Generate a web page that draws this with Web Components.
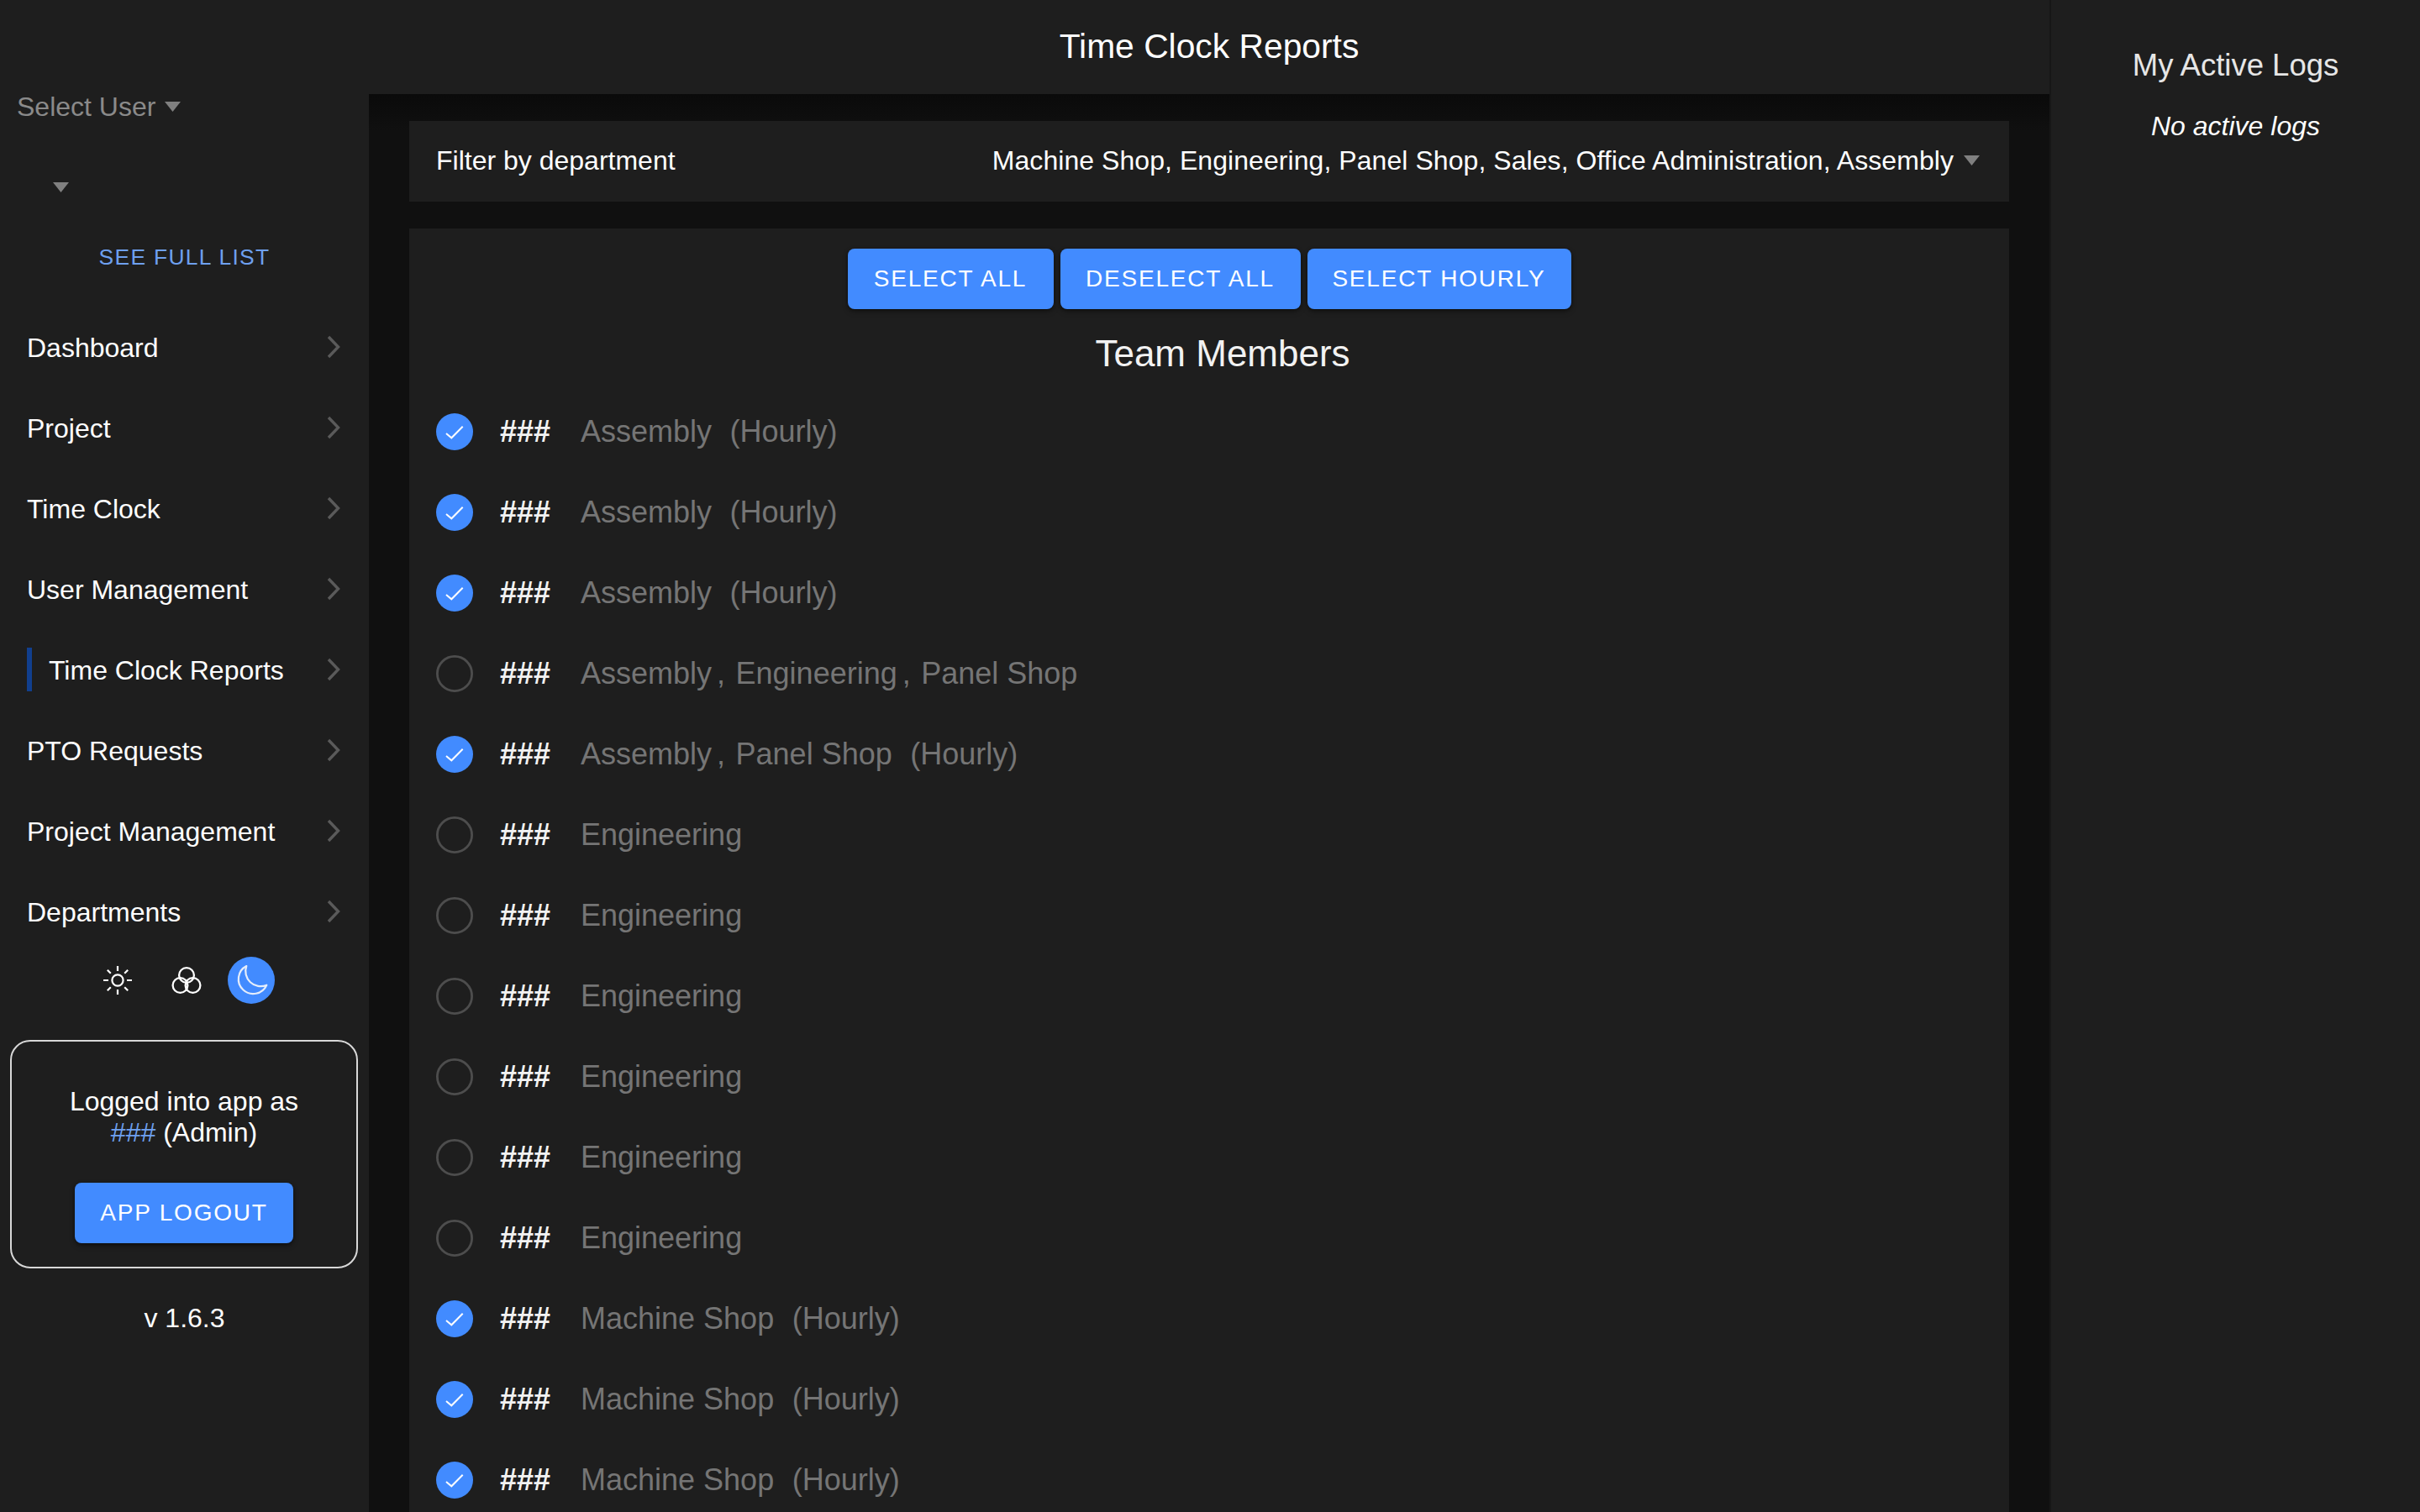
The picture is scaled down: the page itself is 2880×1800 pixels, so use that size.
<!DOCTYPE html>
<html lang="en">
<head>
<meta charset="utf-8">
<title>Time Clock Reports</title>
<style>
  html, body { margin: 0; height: 100%; overflow: hidden; background: #0f0f0f; }
  body { font-family: "Liberation Sans", Arial, sans-serif; color: #fff; }
</style>
</head>
<body>
<tc-app>
  <tc-sidebar slot="sidebar">
    <tc-nav-item>Dashboard</tc-nav-item>
    <tc-nav-item>Project</tc-nav-item>
    <tc-nav-item>Time Clock</tc-nav-item>
    <tc-nav-item>User Management</tc-nav-item>
    <tc-nav-item active>Time Clock Reports</tc-nav-item>
    <tc-nav-item>PTO Requests</tc-nav-item>
    <tc-nav-item>Project Management</tc-nav-item>
    <tc-nav-item>Departments</tc-nav-item>
  </tc-sidebar>

  <tc-report slot="main">
    <tc-member checked depts="Assembly" hourly></tc-member>
    <tc-member checked depts="Assembly" hourly></tc-member>
    <tc-member checked depts="Assembly" hourly></tc-member>
    <tc-member depts="Assembly|Engineering|Panel Shop"></tc-member>
    <tc-member checked depts="Assembly|Panel Shop" hourly></tc-member>
    <tc-member depts="Engineering"></tc-member>
    <tc-member depts="Engineering"></tc-member>
    <tc-member depts="Engineering"></tc-member>
    <tc-member depts="Engineering"></tc-member>
    <tc-member depts="Engineering"></tc-member>
    <tc-member depts="Engineering"></tc-member>
    <tc-member checked depts="Machine Shop" hourly></tc-member>
    <tc-member checked depts="Machine Shop" hourly></tc-member>
    <tc-member checked depts="Machine Shop" hourly></tc-member>
  </tc-report>

  <tc-active-logs slot="aside"></tc-active-logs>
</tc-app>

<script>
const FONT = '"Liberation Sans", Arial, sans-serif';

// Small grey dropdown triangle, used in a few places
const caret = (w = 19, h = 12) => `
  <svg width="${w}" height="${h}" viewBox="0 0 19 12" aria-hidden="true" style="display:block;flex:none">
    <path d="M0 0H19L9.5 12Z" fill="#808080"/>
  </svg>`;

class TcApp extends HTMLElement {
  constructor() {
    super();
    this.attachShadow({ mode: 'open' });
    this.shadowRoot.innerHTML = `
      <style>
        :host {
          display: grid;
          grid-template-columns: 439px 2000px 441px;
          height: 1800px;
          overflow: hidden;
          font-family: ${FONT};
        }
        ::slotted(*) { min-width: 0; }
      </style>
      <slot name="sidebar"></slot>
      <slot name="main"></slot>
      <slot name="aside"></slot>
    `;
  }
}

class TcButton extends HTMLElement {
  constructor() {
    super();
    this.attachShadow({ mode: 'open' });
    this.shadowRoot.innerHTML = `
      <style>
        :host { display: inline-block; vertical-align: top; }
        button {
          display: block;
          height: 72px;
          width: var(--btn-width, auto);
          padding: 0;
          border: none;
          border-radius: 8px;
          background: #428bff;
          color: #fff;
          font: 28px/72px ${FONT};
          letter-spacing: 1.8px;
          text-transform: uppercase;
          box-shadow: 0 3px 6px rgba(0, 0, 0, .35), 0 1px 3px rgba(0, 0, 0, .3);
        }
      </style>
      <button type="button"><slot></slot></button>
    `;
  }
}

class TcNavItem extends HTMLElement {
  constructor() {
    super();
    this.attachShadow({ mode: 'open' });
    this.shadowRoot.innerHTML = `
      <style>
        :host {
          display: flex;
          align-items: center;
          justify-content: space-between;
          height: 96px;
          padding: 0 32px;
          font-size: 32px;
          color: #fff;
        }
        .label { display: flex; align-items: center; white-space: nowrap; }
        .text { padding-top: 2px; }
        :host([active]) .label::before {
          content: "";
          width: 6px;
          height: 52px;
          margin-right: 20px;
          background: #113f8e;
        }
        svg { display: block; flex: none; margin-right: 2px; }
      </style>
      <span class="label"><span class="text"><slot></slot></span></span>
      <svg width="18" height="30" viewBox="0 0 18 30" aria-hidden="true">
        <path d="M4 3L15.5 15L4 27" fill="none" stroke="#5a5a5a" stroke-width="3.4"/>
      </svg>
    `;
  }
}

class TcThemeSwitch extends HTMLElement {
  constructor() {
    super();
    this.attachShadow({ mode: 'open' });
    this.shadowRoot.innerHTML = `
      <style>
        :host { display: block; height: 56px; }
        .row { display: flex; padding-left: 112px; }
        .opt { flex: none; width: 56px; height: 56px; display: grid; place-items: center; border-radius: 50%; }
        .opt + .opt { margin-left: 26px; }
        .opt.on { margin-left: 21px; background: #428bff; }
        svg { display: block; }
      </style>
      <div class="row">
        <div class="opt">
          <svg width="40" height="40" viewBox="-20 -20 40 40" fill="none" stroke="#fff" stroke-width="2.2" aria-hidden="true">
            <circle r="6.6"/>
            <path d="M0-17V-11M0 11V17M-17 0H-11M11 0H17M-12.2-12.2L-8.2-8.2M8.2 8.2L12.2 12.2M-12.2 12.2L-8.2 8.2M8.2-8.2L12.2-12.2"/>
          </svg>
        </div>
        <div class="opt">
          <svg width="40" height="40" viewBox="-20 -20 40 40" fill="none" stroke="#fff" stroke-width="2.3" aria-hidden="true">
            <circle cx="0" cy="-6" r="8.9"/>
            <circle cx="-7.5" cy="6" r="8.9"/>
            <circle cx="7.5" cy="6" r="8.9"/>
          </svg>
        </div>
        <div class="opt on">
          <svg width="56" height="56" viewBox="-28 -28 56 56" fill="none" stroke="#e4edfb" stroke-width="2.2" stroke-linejoin="round" aria-hidden="true">
            <path d="M-5.7-17A17.5 17.5 0 1 0 18.3 5.7A18 18 0 0 1-5.7-17Z"/>
          </svg>
        </div>
      </div>
    `;
  }
}

class TcSidebar extends HTMLElement {
  constructor() {
    super();
    this.attachShadow({ mode: 'open' });
    this.shadowRoot.innerHTML = `
      <style>
        :host {
          display: flex;
          flex-direction: column;
          height: 1800px;
          background: #1e1e1e;
          font-size: 32px;
          color: #fff;
        }
        .select-user {
          display: flex;
          align-items: center;
          gap: 11px;
          height: 38px;
          margin: 108px 0 0 20px;
          color: #8a8a8a;
          white-space: nowrap;
        }
        .select-blank { height: 12px; margin: 71px 0 0 63px; }
        .see-all {
          margin-top: 62px;
          height: 30px;
          line-height: 30px;
          text-align: center;
          font-size: 26.4px;
          letter-spacing: 1.32px;
          color: #6ea0ef;
        }
        nav { margin-top: 44px; display: flex; flex-direction: column; }
        tc-theme-switch { margin-top: 6px; }
        .login {
          box-sizing: border-box;
          width: 414px;
          height: 272px;
          margin: 43px 0 0 12px;
          padding: 53px 0 0;
          border: 2px solid #d8d8d8;
          border-radius: 24px;
          text-align: center;
          line-height: 37px;
        }
        .login b { font-weight: 400; color: #6ea0ef; }
        .login tc-button { margin-top: 41px; --btn-width: 260px; }
        .version { margin-top: 41px; text-align: center; line-height: 37px; }
      </style>
      <div class="select-user">Select User ${caret()}</div>
      <div class="select-blank">${caret()}</div>
      <div class="see-all">SEE FULL LIST</div>
      <nav><slot></slot></nav>
      <tc-theme-switch></tc-theme-switch>
      <div class="login">
        Logged into app as<br><b>###</b> (Admin)<br>
        <tc-button>App Logout</tc-button>
      </div>
      <div class="version">v 1.6.3</div>
    `;
  }
}

class TcMember extends HTMLElement {
  constructor() {
    super();
    this.attachShadow({ mode: 'open' });
  }

  connectedCallback() {
    const depts = (this.getAttribute('depts') || '').split('|');
    const list = depts.map((d, i) =>
      `<span>${d}</span>${i < depts.length - 1 ? '<span class="sep">,</span>' : ''}`).join('');
    const check = this.hasAttribute('checked') ? `
      <svg width="44" height="44" viewBox="-22 -22 44 44" aria-hidden="true">
        <circle r="22" fill="#428bff"/>
        <path d="M-10 2L-3.7 7.3L9.7-6.3" fill="none" stroke="#fff" stroke-width="2"/>
      </svg>` : `
      <svg width="44" height="44" viewBox="-22 -22 44 44" aria-hidden="true">
        <circle r="20.6" fill="none" stroke="#4d4d4d" stroke-width="2.8"/>
      </svg>`;

    this.shadowRoot.innerHTML = `
      <style>
        :host {
          display: flex;
          align-items: center;
          height: 96px;
          font-size: 36px;
          white-space: nowrap;
        }
        svg { display: block; flex: none; }
        .name { margin-left: 32px; width: 96px; font-weight: 700; color: #f2f2f2; }
        .depts { color: #757575; }
        .sep { margin: 0 12.5px 0 6px; }
        .hourly { margin-left: 21.5px; }
      </style>
      ${check}
      <span class="name">###</span>
      <span class="depts">${list}${this.hasAttribute('hourly') ? '<span class="hourly">(Hourly)</span>' : ''}</span>
    `;
  }
}

class TcReport extends HTMLElement {
  constructor() {
    super();
    this.attachShadow({ mode: 'open' });
    this.shadowRoot.innerHTML = `
      <style>
        :host { display: flex; flex-direction: column; height: 1800px; background: #0f0f0f; }
        header {
          flex: none;
          height: 112px;
          padding-bottom: 2px;
          box-sizing: border-box;
          display: flex;
          align-items: center;
          justify-content: center;
          background: #1e1e1e;
          font-size: 40.8px;
          color: #fff;
        }
        .body {
          flex: 1;
          min-height: 0;
          padding: 32px 48px 0;
          display: flex;
          flex-direction: column;
          gap: 32px;
          background: linear-gradient(#0a0a0a, #101010 44px);
        }
        .filter {
          flex: none;
          height: 96px;
          padding: 0 35px 2px 32px;
          box-sizing: border-box;
          display: flex;
          align-items: center;
          justify-content: space-between;
          background: #1e1e1e;
          font-size: 32px;
          white-space: nowrap;
        }
        .filter .value { display: flex; align-items: center; gap: 12px; letter-spacing: .06px; }
        .card { flex: 1; min-height: 0; overflow: hidden; padding: 24px 32px 0; background: #1e1e1e; }
        .actions { display: flex; justify-content: center; gap: 8px; }
        .actions tc-button:nth-child(1) { --btn-width: 245px; }
        .actions tc-button:nth-child(2) { --btn-width: 286px; }
        .actions tc-button:nth-child(3) { --btn-width: 314px; }
        h2 {
          margin: 28px 0 20px;
          height: 50px;
          line-height: 50px;
          padding-left: 32px;
          text-align: center;
          font-size: 44px;
          font-weight: 400;
          color: #f2f2f2;
        }
      </style>
      <header>Time Clock Reports</header>
      <div class="body">
        <div class="filter">
          <span>Filter by department</span>
          <span class="value">Machine Shop, Engineering, Panel Shop, Sales, Office Administration, Assembly ${caret()}</span>
        </div>
        <div class="card">
          <div class="actions">
            <tc-button>Select All</tc-button>
            <tc-button>Deselect All</tc-button>
            <tc-button>Select Hourly</tc-button>
          </div>
          <h2>Team Members</h2>
          <slot></slot>
        </div>
      </div>
    `;
  }
}

class TcActiveLogs extends HTMLElement {
  constructor() {
    super();
    this.attachShadow({ mode: 'open' });
    this.shadowRoot.innerHTML = `
      <style>
        :host {
          display: block;
          height: 1800px;
          padding-top: 57px;
          box-sizing: border-box;
          background: #1e1e1e;
          border-left: 2px solid #171717;
          text-align: center;
        }
        h3 { margin: 0; font-size: 36.5px; line-height: 42px; font-weight: 400; color: #e6e6e6; }
        p { margin: 32px 0 0; font-size: 32px; line-height: 38px; font-style: italic; color: #fff; }
      </style>
      <h3>My Active Logs</h3>
      <p>No active logs</p>
    `;
  }
}

customElements.define('tc-button', TcButton);
customElements.define('tc-nav-item', TcNavItem);
customElements.define('tc-theme-switch', TcThemeSwitch);
customElements.define('tc-sidebar', TcSidebar);
customElements.define('tc-member', TcMember);
customElements.define('tc-report', TcReport);
customElements.define('tc-active-logs', TcActiveLogs);
customElements.define('tc-app', TcApp);
</script>
</body>
</html>
